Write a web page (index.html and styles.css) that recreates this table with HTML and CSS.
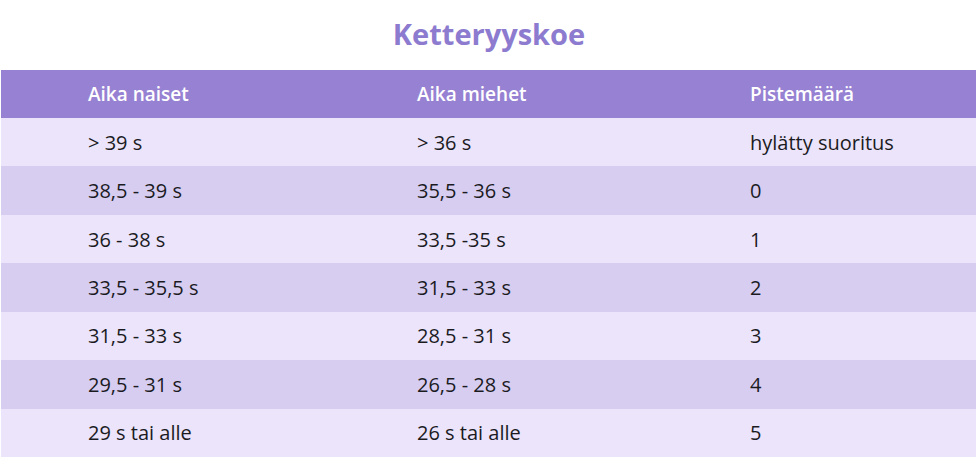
FILE: index.html
```html
<!DOCTYPE html>
<html lang="fi">
<head>
<meta charset="utf-8">
<title>Ketteryyskoe</title>
<link rel="stylesheet" href="styles.css">
</head>
<body>
<div class="page">
  <h1 class="title">Ketteryyskoe</h1>
  <div class="table">
    <div class="row head"><div>Aika naiset</div><div>Aika miehet</div><div>Pistemäärä</div></div>
    <div class="row light"><div>&gt; 39 s</div><div>&gt; 36 s</div><div>hylätty suoritus</div></div>
    <div class="row dark"><div>38,5 - 39 s</div><div>35,5 - 36 s</div><div>0</div></div>
    <div class="row light"><div>36 - 38 s</div><div>33,5 -35 s</div><div>1</div></div>
    <div class="row dark"><div>33,5 - 35,5 s</div><div>31,5 - 33 s</div><div>2</div></div>
    <div class="row light"><div>31,5 - 33 s</div><div>28,5 - 31 s</div><div>3</div></div>
    <div class="row dark"><div>29,5 - 31 s</div><div>26,5 - 28 s</div><div>4</div></div>
    <div class="row light"><div>29 s tai alle</div><div>26 s tai alle</div><div>5</div></div>
  </div>
</div>
</body>
</html>
```
FILE: styles.css
```css
* { box-sizing: border-box; }
html, body { margin: 0; padding: 0; background: #ffffff; }
body { font-family: "Open Sans", "Noto Sans", sans-serif; color: #1b1b1f; }
.page { width: 978px; height: 459px; overflow: hidden; }
.title {
  margin: 0;
  height: 70px;
  display: flex;
  align-items: center;
  justify-content: center;
  font-size: 29px;
  font-weight: 700;
  color: #8c7bcf;
  padding-bottom: 4px;
}
.table { margin-left: 1px; width: 975px; }
.row {
  display: grid;
  grid-template-columns: 329px 333px 1fr;
  padding-left: 87px;
  align-items: center;
  height: 48.43px;
  font-size: 20px;
}
.row.head { height: 48px; background: #9681d2; color: #ffffff; font-weight: 600; font-size: 19px; }
.row.light { background: #ebe4fa; }
.row.dark { background: #d7cdf1; }
```
